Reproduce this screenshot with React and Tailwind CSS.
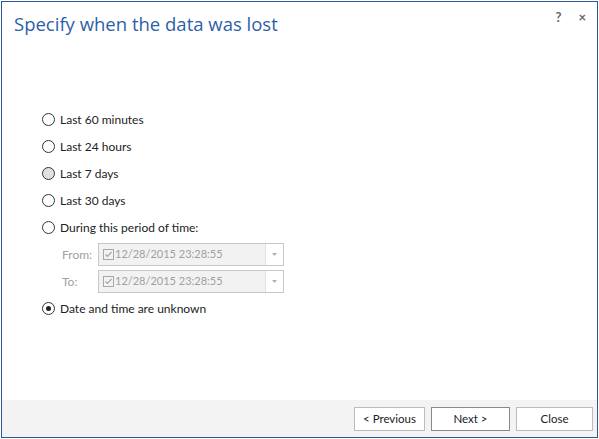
import React from 'react';

const options = [
  { label: 'Last 60 minutes' },
  { label: 'Last 24 hours' },
  { label: 'Last 7 days', hover: true },
  { label: 'Last 30 days' },
  { label: 'During this period of time:' },
];

function Radio({ checked, hover }) {
  return (
    <span
      className={`w-[13px] h-[13px] rounded-full border border-[#333] flex items-center justify-center shrink-0 ${hover ? 'bg-[#e0e0e0]' : 'bg-white'}`}
    >
      {checked && <span className="w-[5px] h-[5px] rounded-full bg-[#222]" />}
    </span>
  );
}

function DateField({ label }) {
  return (
    <div className="flex items-center h-[27px]">
      <span className="w-[38px] pl-[2px] text-[#a0a0a0]">{label}</span>
      <div className="w-[186px] h-[23px] border border-[#c8c8c8] bg-[#f2f2f2] flex items-center pl-[4px]">
        <svg width="11" height="11" viewBox="0 0 11 11" className="shrink-0">
          <rect x="0.5" y="0.5" width="10" height="10" fill="none" stroke="#a8a8a8" />
          <path d="M2.5 5.5 L4.5 7.5 L8.5 3" fill="none" stroke="#a8a8a8" strokeWidth="1.2" />
        </svg>
        <span className="text-[#a0a0a0] text-[11px] ml-[1px]">12/28/2015 23:28:55</span>
        <div className="ml-auto w-[18px] h-full border-l border-[#e2e2e2] flex items-center justify-center bg-white">
          <svg width="5" height="3" viewBox="0 0 5 3"><path d="M0 0 H5 L2.5 3 Z" fill="#b0b0b0" /></svg>
        </div>
      </div>
    </div>
  );
}

export default function App() {
  return (
    <div className="w-[599px] h-[439px] bg-white p-[1px] font-['Lato','Open_Sans',sans-serif] text-[12px] text-[#222]">
      <div className="w-[597px] h-[437px] border border-[#2b579a] flex flex-col bg-white">
        <div className="flex items-start justify-between h-[104px]">
          <h1 className="pl-[12px] pt-[7px] text-[18.5px] leading-[30px] text-[#2e5fa8] font-['Open_Sans',sans-serif]">
            Specify when the data was lost
          </h1>
          <div className="flex gap-[17px] pt-[6px] pr-[11px] text-[#666] font-bold text-[13px]">
            <span>?</span>
            <span>×</span>
          </div>
        </div>

        <div className="flex-1 flex flex-col pl-[40px]">
          {options.map((o) => (
            <div key={o.label} className="h-[27px] flex items-center gap-[5px]">
              <Radio hover={o.hover} />
              <span>{o.label}</span>
            </div>
          ))}
          <div className="flex flex-col pl-[18px]">
            <DateField label="From:" />
            <DateField label="To:" />
          </div>
          <div className="h-[27px] flex items-center gap-[5px]">
            <Radio checked />
            <span>Date and time are unknown</span>
          </div>
        </div>

        <div className="h-[37px] bg-[#f3f3f3] flex items-center justify-end gap-[6px] pr-[4px]">
          <button className="w-[71px] h-[24px] border border-[#bcbcbc] bg-white text-[11.5px]">&lt; Previous</button>
          <button className="w-[79px] h-[24px] border border-[#8a8a8a] bg-white text-[11.5px]">Next &gt;</button>
          <button className="w-[77px] h-[24px] border border-[#bcbcbc] bg-white text-[11.5px]">Close</button>
        </div>
      </div>
    </div>
  );
}
